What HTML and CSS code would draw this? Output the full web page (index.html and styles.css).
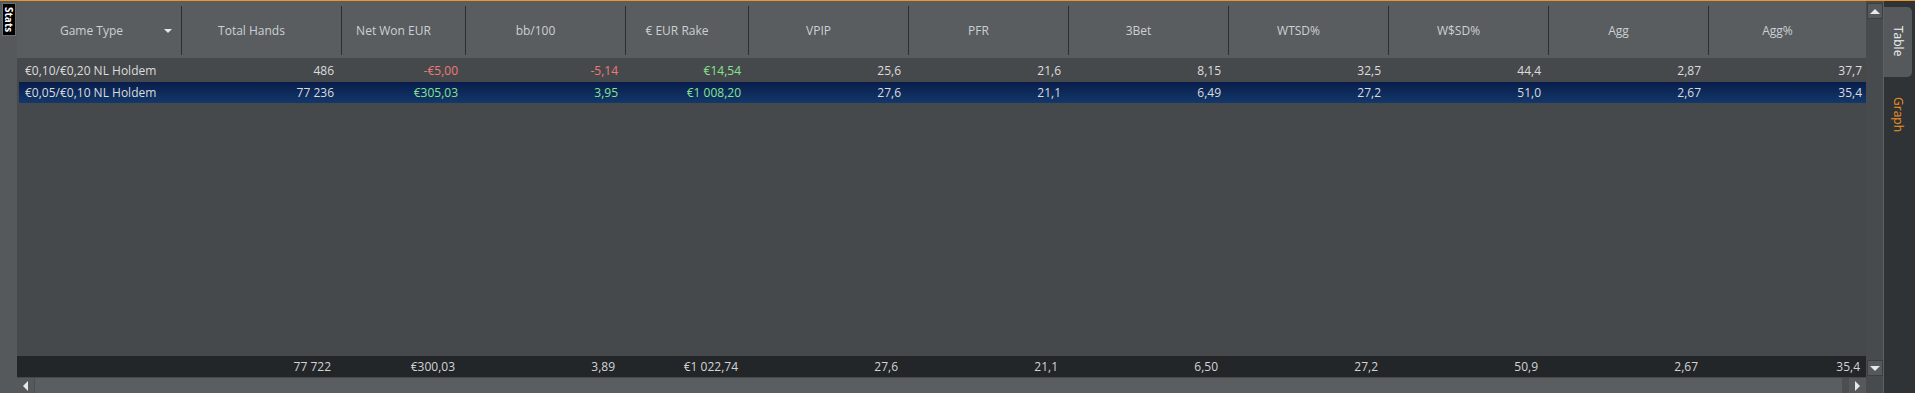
FILE: index.html
```html
<!DOCTYPE html>
<html lang="en">
<head>
  <meta charset="UTF-8">
  <title>Stats</title>
  <link rel="stylesheet" href="styles.css">
</head>
<body>
  <div class="app">
    <div class="left-rail">
      <div class="stats-tab">Stats</div>
    </div>

    <div class="view">
      <div class="sheet">
        <div class="row head">
          <div class="hcell first">Game Type <span class="drop"></span></div>
          <div class="hcell">Total Hands</div>
          <div class="hcell">Net Won EUR</div>
          <div class="hcell">bb/100</div>
          <div class="hcell">€ EUR Rake</div>
          <div class="hcell">VPIP</div>
          <div class="hcell">PFR</div>
          <div class="hcell">3Bet</div>
          <div class="hcell">WTSD%</div>
          <div class="hcell">W$SD%</div>
          <div class="hcell">Agg</div>
          <div class="hcell last">Agg%</div>
        </div>

        <div class="rows">
          <div class="row data">
            <div class="cell name">€0,10/€0,20 NL Holdem</div>
            <div class="cell">486</div>
            <div class="cell neg">-€5,00</div>
            <div class="cell neg">-5,14</div>
            <div class="cell pos">€14,54</div>
            <div class="cell">25,6</div>
            <div class="cell">21,6</div>
            <div class="cell">8,15</div>
            <div class="cell">32,5</div>
            <div class="cell">44,4</div>
            <div class="cell">2,87</div>
            <div class="cell">37,7</div>
          </div>
          <div class="row data selected">
            <div class="cell name">€0,05/€0,10 NL Holdem</div>
            <div class="cell">77 236</div>
            <div class="cell pos">€305,03</div>
            <div class="cell pos">3,95</div>
            <div class="cell pos">€1 008,20</div>
            <div class="cell">27,6</div>
            <div class="cell">21,1</div>
            <div class="cell">6,49</div>
            <div class="cell">27,2</div>
            <div class="cell">51,0</div>
            <div class="cell">2,67</div>
            <div class="cell">35,4</div>
          </div>
        </div>

        <div class="row totals">
          <div class="cell name"></div>
          <div class="cell">77 722</div>
          <div class="cell">€300,03</div>
          <div class="cell">3,89</div>
          <div class="cell">€1 022,74</div>
          <div class="cell">27,6</div>
          <div class="cell">21,1</div>
          <div class="cell">6,50</div>
          <div class="cell">27,2</div>
          <div class="cell">50,9</div>
          <div class="cell">2,67</div>
          <div class="cell">35,4</div>
        </div>
      </div>

      <div class="vscroll">
        <div class="sbtn up"><span class="tri-up"></span></div>
        <div class="sbtn down"><span class="tri-down"></span></div>
      </div>

      <div class="hscroll">
        <div class="hbtn"><span class="tri-left"></span></div>
        <div class="thumb"></div>
        <div class="hbtn"><span class="tri-right"></span></div>
      </div>
      <div class="corner"></div>
    </div>

    <div class="right-rail">
      <div class="tab active">Table</div>
      <div class="tab">Graph</div>
    </div>
  </div>
</body>
</html>
```

FILE: styles.css
```css
body {
  margin: 0;
  background-color: #2f3336;
  font-family: "Open Sans", "Noto Sans", sans-serif;
  font-size: 12px;
  overflow: hidden;
}

.app {
  display: flex;
  height: 392px;
  border-top: 1px solid #e8962e;
}

.left-rail {
  width: 17px;
  background-color: #55595c;
}

.stats-tab {
  margin: 2px 0 0 2px;
  width: 12px;
  height: 31px;
  background: #000;
  border: 1px solid #6a6e71;
  color: #fff;
  writing-mode: vertical-rl;
  font-size: 10px;
  font-weight: bold;
  line-height: 12px;
  text-align: center;
}

/* grid + scrollbars */
.view {
  width: 1866px;
  display: grid;
  grid-template-columns: 1849px 17px;
  grid-template-rows: 376px 16px;
  background-color: #46494c;
}

.sheet {
  display: flex;
  flex-direction: column;
  background-color: #46494c;
}

.row {
  display: grid;
  grid-template-columns: 165px 160px 124px 160px 123px repeat(6, 160px) 157px;
}

.head {
  height: 57px;
  background-color: #595d60;
}

.hcell {
  position: relative;
  margin: 5px 0 3px;
  border-right: 1px solid #2c2f32;
  display: flex;
  align-items: center;
  justify-content: center;
  padding-right: 20px;
  color: #cdd0d2;
  font-size: 12px;
}

.hcell.first {
  padding-right: 15px;
}

.hcell.last {
  border-right: none;
}

.drop {
  position: absolute;
  right: 9px;
  top: 23px;
  border-left: 4px solid transparent;
  border-right: 4px solid transparent;
  border-top: 4px solid #e6e6e6;
}

.rows {
  flex: 1;
  padding-top: 2px;
}

.data {
  height: 21px;
  margin-bottom: 1px;
  color: #dcdcdc;
}

.cell {
  text-align: right;
  padding-right: 8px;
  line-height: 21px;
  white-space: nowrap;
}

.data .cell:last-child {
  padding-right: 4px;
}

.cell.name {
  text-align: left;
  padding-left: 8px;
}

.neg { color: #ee7a78; }
.pos { color: #86e48e; }

.selected {
  margin-left: 2px;
  grid-template-columns: 163px 160px 124px 160px 123px repeat(6, 160px) 157px;
  background: linear-gradient(#081d4b, #13386a);
}

.selected .cell.name {
  padding-left: 6px;
}

.totals {
  height: 21px;
  background-color: #232629;
  color: #d2d4d6;
}

.totals .cell {
  padding-right: 11px;
}

.totals .cell:last-child {
  padding-right: 6px;
}

.vscroll {
  display: flex;
  flex-direction: column;
  justify-content: space-between;
  padding: 2px 0 1px 1px;
  background-color: #484b4e;
}

.sbtn {
  width: 14px;
  height: 14px;
  background-color: #55595c;
  border: 1px solid #3c3f42;
  display: flex;
  align-items: center;
  justify-content: center;
}

.tri-up {
  border-left: 5px solid transparent;
  border-right: 5px solid transparent;
  border-bottom: 5px solid #e8e8e8;
}

.tri-down {
  border-left: 5px solid transparent;
  border-right: 5px solid transparent;
  border-top: 5px solid #e8e8e8;
}

.hscroll {
  display: flex;
  margin-top: 1px;
  background-color: #4b4f52;
}

.hbtn {
  width: 17px;
  display: flex;
  align-items: center;
  justify-content: center;
  background-color: #55595c;
}

.thumb {
  flex: 1;
  margin: 0 7px 0 1px;
  background-color: #5a5e61;
}

.tri-left {
  border-top: 5px solid transparent;
  border-bottom: 5px solid transparent;
  border-right: 5px solid #e8e8e8;
}

.tri-right {
  border-top: 5px solid transparent;
  border-bottom: 5px solid transparent;
  border-left: 5px solid #e8e8e8;
}

.corner {
  background-color: #484b4e;
}

.right-rail {
  width: 31px;
  border-left: 1px solid #5d6164;
  padding-top: 6px;
}

.tab {
  writing-mode: vertical-rl;
  width: 28px;
  color: #f0901e;
  font-size: 12px;
  line-height: 28px;
  padding: 16px 0 12px;
}

.tab.active {
  height: 42px;
  background-color: #55595c;
  color: #f2f2f2;
  border-radius: 0 5px 5px 0;
  margin-bottom: 4px;
  padding: 19px 0 9px;
}
```
